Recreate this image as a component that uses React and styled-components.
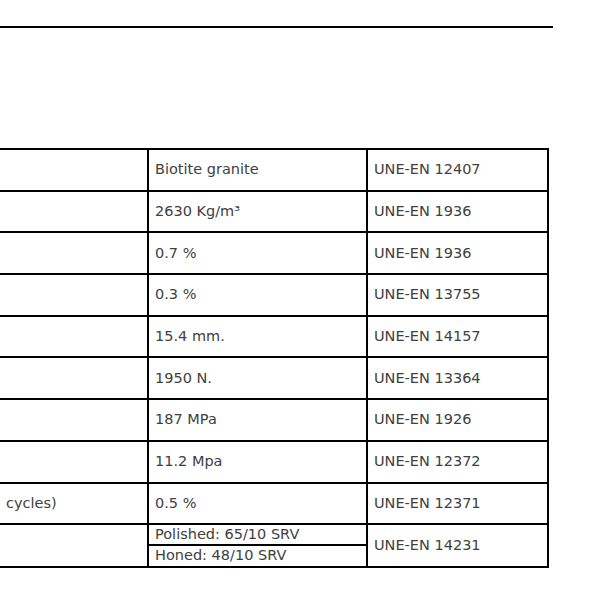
import React from "react";
import styled, { createGlobalStyle } from "styled-components";

const Global = createGlobalStyle`
  html, body { margin: 0; padding: 0; background: #fff; overflow: hidden; }
  body { font-family: "DejaVu Sans", "Liberation Sans", sans-serif; }
`;

const Page = styled.div`
  width: 597px;
  height: 596px;
  overflow: hidden;
  padding-top: 26px;
  box-sizing: border-box;
`;

const Rule = styled.hr`
  margin: 0;
  border: 0;
  height: 2px;
  width: 553px;
  background: #000;
`;

const Table = styled.table`
  margin-top: 120px;
  margin-left: -2px;
  border-collapse: collapse;
  table-layout: fixed;
  width: 551px;
`;

const Row = styled.tr`
  height: 41.7px;
`;

const Cell = styled.td`
  border: 2px solid #000;
  font-size: 14.5px;
  color: #404040;
  vertical-align: middle;
  white-space: nowrap;
  overflow: hidden;
  line-height: 1.2;
  padding: ${(p) => (p.$split ? "0" : p.$label ? "0 0 0 6px" : "0 6px")};
`;

const Sub = styled.div`
  height: ${(p) => (p.$first ? "19px" : "20px")};
  display: flex;
  align-items: center;
  padding: 0 6px;
  border-top: ${(p) => (p.$first ? "none" : "2px solid #000")};
`;

const rows = [
  ["", "Biotite granite", "UNE-EN 12407"],
  ["", "2630 Kg/m³", "UNE-EN 1936"],
  ["", "0.7 %", "UNE-EN 1936"],
  ["", "0.3 %", "UNE-EN 13755"],
  ["", "15.4 mm.", "UNE-EN 14157"],
  ["", "1950 N.", "UNE-EN 13364"],
  ["", "187 MPa", "UNE-EN 1926"],
  ["", "11.2 Mpa", "UNE-EN 12372"],
  ["cycles)", "0.5 %", "UNE-EN 12371"],
];

export default function App() {
  return (
    <>
      <Global />
      <Page>
        <Rule />
        <Table>
          <colgroup>
            <col style={{ width: "149px" }} />
            <col style={{ width: "219px" }} />
            <col style={{ width: "181px" }} />
          </colgroup>
          <tbody>
            {rows.map(([a, b, c]) => (
              <Row key={c + b}>
                <Cell $label>{a}</Cell>
                <Cell>{b}</Cell>
                <Cell>{c}</Cell>
              </Row>
            ))}
            <Row>
              <Cell $label />
              <Cell $split>
                <Sub $first>Polished: 65/10 SRV</Sub>
                <Sub>Honed: 48/10 SRV</Sub>
              </Cell>
              <Cell>UNE-EN 14231</Cell>
            </Row>
          </tbody>
        </Table>
      </Page>
    </>
  );
}
